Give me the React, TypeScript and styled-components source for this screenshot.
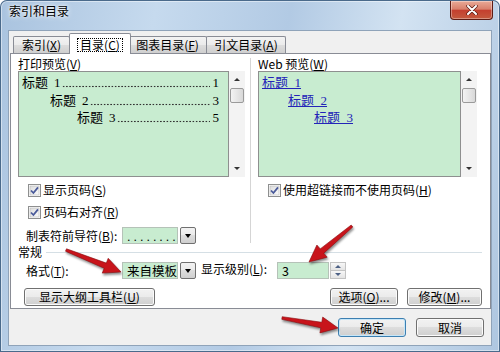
import React from 'react';
import styled, { createGlobalStyle } from 'styled-components';

const GlobalStyle = createGlobalStyle`
  html, body { margin: 0; padding: 0; background: #fff; }
  body {
    font-family: "Noto Sans CJK SC", "Liberation Sans", sans-serif;
    font-size: 12px;
    color: #000;
  }
`;

const Frame = styled.div`
  position: relative;
  width: 500px;
  height: 352px;
  box-sizing: border-box;
  padding: 0 8px 6px;
  display: flex;
  flex-direction: column;
  border-radius: 7px 7px 0 0;
  background: linear-gradient(100deg, #a9c3df 0%, #c6daee 28%, #b2cae4 52%, #d3e3f2 72%, #aec6e0 100%);
  box-shadow: inset 0 0 0 1px #4a6a8b, inset 0 0 0 2px rgba(255, 255, 255, 0.45);
  overflow: hidden;
`;

const TitleBar = styled.div`
  height: 30px;
  display: flex;
  align-items: flex-start;
`;

const Title = styled.div`
  margin: 3px 0 0 1px;
  line-height: 16px;
  text-shadow: 0 0 6px #fff, 0 0 3px #fff;
`;

const CloseButton = styled.div`
  margin: 1px -1px 0 auto;
  width: 43px;
  height: 19px;
  box-sizing: border-box;
  border: 1px solid #5e1c14;
  border-top: none;
  border-radius: 0 0 4px 4px;
  display: flex;
  align-items: center;
  justify-content: center;
  background: linear-gradient(#e9aa97 0%, #d9806c 45%, #c4402f 52%, #c45a3e 100%);
  box-shadow: inset 0 0 0 1px rgba(255, 255, 255, 0.35);
`;

const Client = styled.div`
  flex: 1;
  display: flex;
  flex-direction: column;
  padding: 2px 0 0 1px;
  background: #f0f0f0;
  border: 1px solid #8fa3b9;
`;

const TabStrip = styled.div`
  height: 21px;
  display: flex;
  align-items: flex-end;
  padding-left: 3px;
  position: relative;
  z-index: 2;
`;

const Tab = styled.div<{ $w: number; $active?: boolean }>`
  width: ${p => p.$w}px;
  box-sizing: border-box;
  height: ${p => (p.$active ? 21 : 17)}px;
  margin: ${p => (p.$active ? '0 -2px 0 -2px' : '0 0 1px 0')};
  padding-top: ${p => (p.$active ? 3 : 0)}px;
  border: 1px solid #898c95;
  border-bottom: none;
  border-radius: 2px 2px 0 0;
  text-align: center;
  line-height: 15px;
  position: relative;
  z-index: ${p => (p.$active ? 2 : 1)};
  background: ${p => (p.$active
    ? '#fff'
    : 'linear-gradient(#f3f3f3 0%, #ebebeb 49%, #dddddd 50%, #cfcfcf 100%)')};
  & + & { margin-left: ${p => (p.$active ? -2 : -1)}px; }
`;

const Focus = styled.span`
  display: inline-block;
  line-height: 12px;
  padding: 0 2px;
  outline: 1px dotted #000;
`;

const Key = styled.span`
  text-decoration: underline;
`;

const Panel = styled.div`
  height: 256px;
  box-sizing: border-box;
  margin: -1px 0 0 0;
  border: 1px solid #898c95;
  background: #fff;
  display: flex;
  flex-direction: column;
`;

const Upper = styled.div`
  height: 191px;
  display: flex;
`;

const Column = styled.div<{ $w?: number }>`
  ${p => (p.$w ? `width: ${p.$w}px;` : 'flex: 1;')}
  box-sizing: border-box;
  padding: 3px 0 0 7px;
  display: flex;
  flex-direction: column;
`;

const Divider = styled.div`
  width: 1px;
  margin: 4px 0 2px;
  background: #d5d5d5;
`;

const Label = styled.div`
  height: 14px;
  line-height: 14px;
`;

const PreviewRow = styled.div`
  height: 106px;
  display: flex;
`;

const PreviewBox = styled.div<{ $w: number }>`
  width: ${p => p.$w}px;
  box-sizing: border-box;
  border: 1px solid #8e8f8f;
  background: #c8ecd0;
  padding: 2px 9px 0 3px;
  font-family: "Liberation Serif", "Noto Sans CJK SC", serif;
  font-size: 13px;
`;

const TocLine = styled.div<{ $indent: number }>`
  display: flex;
  height: 17.5px;
  line-height: 17.5px;
  padding-left: ${p => p.$indent}px;
  white-space: nowrap;
`;

const Num = styled.span`
  margin-left: 6px;
`;

const Leader = styled.span`
  flex: 1;
  margin: 0 3px 0 1px;
  background: radial-gradient(circle, #333 0.7px, transparent 1.1px) 0 11px / 3.25px 3px repeat-x;
`;

const WebLink = styled.div<{ $indent: number }>`
  height: 17.5px;
  line-height: 17.5px;
  padding-left: ${p => p.$indent}px;
  color: #2323b8;
  white-space: nowrap;
  & > span { text-decoration: underline; }
`;

const ScrollBar = styled.div`
  width: 16px;
  display: flex;
  flex-direction: column;
  background: #f3f3f3;
`;

const ScrollArrow = styled.div<{ $down?: boolean }>`
  height: 17px;
  display: flex;
  align-items: center;
  justify-content: center;
  &::after {
    content: '';
    border-left: 3px solid transparent;
    border-right: 3px solid transparent;
    ${p => (p.$down ? 'border-top: 3px solid #333;' : 'border-bottom: 3px solid #333;')}
  }
`;

const Thumb = styled.div`
  height: 15px;
  margin: 0 1px;
  box-sizing: border-box;
  border: 1px solid #9a9a9a;
  border-radius: 2px;
  background: linear-gradient(90deg, #f3f3f3, #e6e6e6 50%, #d8d8d8);
`;

const ScrollSpace = styled.div`
  flex: 1;
`;

const Row = styled.div<{ $top: number; $left: number; $h?: number }>`
  display: flex;
  align-items: center;
  margin-top: ${p => p.$top}px;
  padding-left: ${p => p.$left}px;
  height: ${p => p.$h ?? 14}px;
  white-space: nowrap;
`;

const CheckLabel = styled.span`
  margin-left: 2px;
  line-height: 14px;
`;

const FieldLabel = styled.span<{ $w: number }>`
  width: ${p => p.$w}px;
  line-height: 14px;
`;

const Field = styled.div<{ $w: number }>`
  width: ${p => p.$w}px;
  height: 17px;
  box-sizing: border-box;
  border: 1px solid #b5c2b8;
  background: #c8ecd0;
  padding-left: 4px;
  line-height: 15px;
  font-size: 12.5px;
`;

const Dots = styled.span`
  letter-spacing: 3px;
  font-family: "Liberation Sans", sans-serif;
`;

const DropButton = styled.div`
  width: 16px;
  height: 17px;
  margin-left: 2px;
  box-sizing: border-box;
  border: 1px solid #707070;
  border-radius: 2px;
  background: linear-gradient(#f2f2f2 0%, #ebebeb 49%, #dddddd 50%, #cfcfcf 100%);
  display: flex;
  align-items: center;
  justify-content: center;
  &::after {
    content: '';
    border-left: 3.5px solid transparent;
    border-right: 3.5px solid transparent;
    border-top: 4px solid #000;
  }
`;

const Spin = styled.div`
  display: flex;
  margin-left: 5px;
`;

const SpinButtons = styled.div`
  width: 16px;
  height: 17px;
  margin-left: 1px;
  display: flex;
  flex-direction: column;
`;

const SpinHalf = styled.div<{ $down?: boolean }>`
  flex: 1;
  box-sizing: border-box;
  border: 1px solid #c3c3c3;
  ${p => (p.$down ? 'border-top: none;' : '')}
  background: linear-gradient(#f7f7f7, #e4e4e4);
  display: flex;
  align-items: center;
  justify-content: center;
  &::after {
    content: '';
    border-left: 3px solid transparent;
    border-right: 3px solid transparent;
    ${p => (p.$down ? 'border-top: 3px solid #4d6185;' : 'border-bottom: 3px solid #4d6185;')}
  }
`;

const Group = styled.div`
  flex: 1;
  display: flex;
  flex-direction: column;
  padding: 0 8px 0 7px;
`;

const GroupHeader = styled.div`
  height: 14px;
  line-height: 14px;
  display: flex;
  align-items: center;
  &::after {
    content: '';
    flex: 1;
    height: 1px;
    margin-left: 4px;
    background: #d5dfe5;
  }
`;

const Button = styled.button<{ $w: number; $default?: boolean; $left?: number | 'auto' }>`
  width: ${p => p.$w}px;
  height: ${p => (p.$default !== undefined ? 19 : 18)}px;
  margin-left: ${p => (p.$left === undefined ? '0' : p.$left === 'auto' ? 'auto' : `${p.$left}px`)};
  box-sizing: border-box;
  padding: 0;
  border: 1px solid ${p => (p.$default ? '#3c7fb1' : '#707070')};
  border-radius: 3px;
  background: linear-gradient(#f2f2f2 0%, #ebebeb 49%, #dddddd 50%, #cfcfcf 100%);
  box-shadow: inset 0 0 0 1px ${p => (p.$default ? '#c6e6f8' : '#fbfbfb')};
  font-family: "Noto Sans CJK SC", "Liberation Sans", sans-serif;
  font-size: 12px;
  line-height: 14px;
  color: #000;
`;

const ButtonRow = styled.div`
  display: flex;
  justify-content: flex-end;
  gap: 10px;
  margin-top: 9px;
  padding-right: 7px;
`;

const ArrowLayer = styled.svg`
  position: absolute;
  left: 0;
  top: 0;
  pointer-events: none;
  filter: drop-shadow(1px 2px 1px rgba(0, 0, 0, 0.45));
`;

const Check = () => (
  <svg width="13" height="13" viewBox="0 0 13 13">
    <defs>
      <linearGradient id="cbg" x1="0" y1="0" x2="1" y2="1">
        <stop offset="0" stopColor="#dcdcdc" />
        <stop offset="1" stopColor="#fbfbfb" />
      </linearGradient>
    </defs>
    <rect x="0.5" y="0.5" width="12" height="12" fill="#fff" stroke="#8e8f8f" />
    <rect x="2" y="2" width="9" height="9" fill="url(#cbg)" stroke="#b8b8b8" strokeWidth="0.6" />
    <path d="M3 6.5 L5.4 9 L10 3.4" fill="none" stroke="#4a5a9a" strokeWidth="1.8" />
  </svg>
);

const arrow = (x1: number, y1: number, x2: number, y2: number) => {
  const dx = x2 - x1;
  const dy = y2 - y1;
  const len = Math.hypot(dx, dy);
  const ux = dx / len;
  const uy = dy / len;
  const nx = -uy;
  const ny = ux;
  const head = 17;
  const bx = x2 - ux * head;
  const by = y2 - uy * head;
  const pts = [
    [x1 + nx * 1.3, y1 + ny * 1.3],
    [bx + nx * 2.8, by + ny * 2.8],
    [bx + nx * 8, by + ny * 8],
    [x2, y2],
    [bx - nx * 8, by - ny * 8],
    [bx - nx * 2.8, by - ny * 2.8],
    [x1 - nx * 1.3, y1 - ny * 1.3],
  ];
  return pts.map(p => p.map(v => v.toFixed(1)).join(',')).join(' ');
};

const tocRows = [
  { indent: 0, n: '1', page: '1' },
  { indent: 28, n: '2', page: '3' },
  { indent: 55, n: '3', page: '5' },
];

export default function App() {
  return (
    <>
      <GlobalStyle />
      <Frame>
        <TitleBar>
          <Title>索引和目录</Title>
          <CloseButton>
            <svg width="12" height="10" viewBox="0 0 12 10">
              <path d="M2 1 L10 9 M10 1 L2 9" stroke="#5a1a12" strokeWidth="3.4" strokeLinecap="round" />
              <path d="M2 1 L10 9 M10 1 L2 9" stroke="#fff" strokeWidth="2" strokeLinecap="round" />
            </svg>
          </CloseButton>
        </TitleBar>
        <Client>
          <TabStrip>
            <Tab $w={57}>索引(<Key>X</Key>)</Tab>
            <Tab $w={62} $active><Focus>目录(<Key>C</Key>)</Focus></Tab>
            <Tab $w={79}>图表目录(<Key>F</Key>)</Tab>
            <Tab $w={80}>引文目录(<Key>A</Key>)</Tab>
          </TabStrip>
          <Panel>
            <Upper>
              <Column $w={239}>
                <Label>打印预览(<Key>V</Key>)</Label>
                <PreviewRow>
                  <PreviewBox $w={211}>
                    {tocRows.map(r => (
                      <TocLine key={r.n} $indent={r.indent}>
                        <span>标题</span>
                        <Num>{r.n}</Num>
                        <Leader />
                        <span>{r.page}</span>
                      </TocLine>
                    ))}
                  </PreviewBox>
                  <ScrollBar>
                    <ScrollArrow />
                    <Thumb />
                    <ScrollSpace />
                    <ScrollArrow $down />
                  </ScrollBar>
                </PreviewRow>
                <Row $top={6} $left={10}>
                  <Check />
                  <CheckLabel>显示页码(<Key>S</Key>)</CheckLabel>
                </Row>
                <Row $top={8} $left={10}>
                  <Check />
                  <CheckLabel>页码右对齐(<Key>R</Key>)</CheckLabel>
                </Row>
                <Row $top={8} $left={8} $h={17}>
                  <FieldLabel $w={96}>制表符前导符(<Key>B</Key>):</FieldLabel>
                  <Field $w={56}><Dots>........</Dots></Field>
                  <DropButton />
                </Row>
              </Column>
              <Divider />
              <Column>
                <Label>Web 预览(<Key>W</Key>)</Label>
                <PreviewRow>
                  <PreviewBox $w={203}>
                    <WebLink $indent={0}><span>标题&nbsp;&nbsp;1</span></WebLink>
                    <WebLink $indent={26}><span>标题&nbsp;&nbsp;2</span></WebLink>
                    <WebLink $indent={52}><span>标题&nbsp;&nbsp;3</span></WebLink>
                  </PreviewBox>
                  <ScrollBar>
                    <ScrollArrow />
                    <Thumb />
                    <ScrollSpace />
                    <ScrollArrow $down />
                  </ScrollBar>
                </PreviewRow>
                <Row $top={6} $left={10}>
                  <Check />
                  <CheckLabel>使用超链接而不使用页码(<Key>H</Key>)</CheckLabel>
                </Row>
              </Column>
            </Upper>
            <Group>
              <GroupHeader>常规</GroupHeader>
              <Row $top={3} $left={8} $h={17}>
                <FieldLabel $w={96}>格式(<Key>T</Key>):</FieldLabel>
                <Field $w={56}>来自模板</Field>
                <DropButton />
                <Spin>
                  <FieldLabel $w={76}>显示级别(<Key>L</Key>):</FieldLabel>
                  <Field $w={52}>3</Field>
                  <SpinButtons>
                    <SpinHalf />
                    <SpinHalf $down />
                  </SpinButtons>
                </Spin>
              </Row>
              <Row $top={9} $left={6} $h={18}>
                <Button $w={131}>显示大纲工具栏(<Key>U</Key>)</Button>
                <Button $w={68} $left="auto">选项(<Key>O</Key>)...</Button>
                <Button $w={75} $left={9}>修改(<Key>M</Key>)...</Button>
              </Row>
            </Group>
          </Panel>
          <ButtonRow>
            <Button $w={68} $default>确定</Button>
            <Button $w={68} $default={false}>取消</Button>
          </ButtonRow>
        </Client>
        <ArrowLayer width="500" height="352" viewBox="0 0 500 352">
          <g fill="#c8141b" stroke="#8a0a0e" strokeWidth="0.6">
            <polygon points={arrow(66, 250, 121, 272)} />
            <polygon points={arrow(352, 226, 309, 262)} />
            <polygon points={arrow(282, 318, 338, 328)} />
          </g>
        </ArrowLayer>
      </Frame>
    </>
  );
}
